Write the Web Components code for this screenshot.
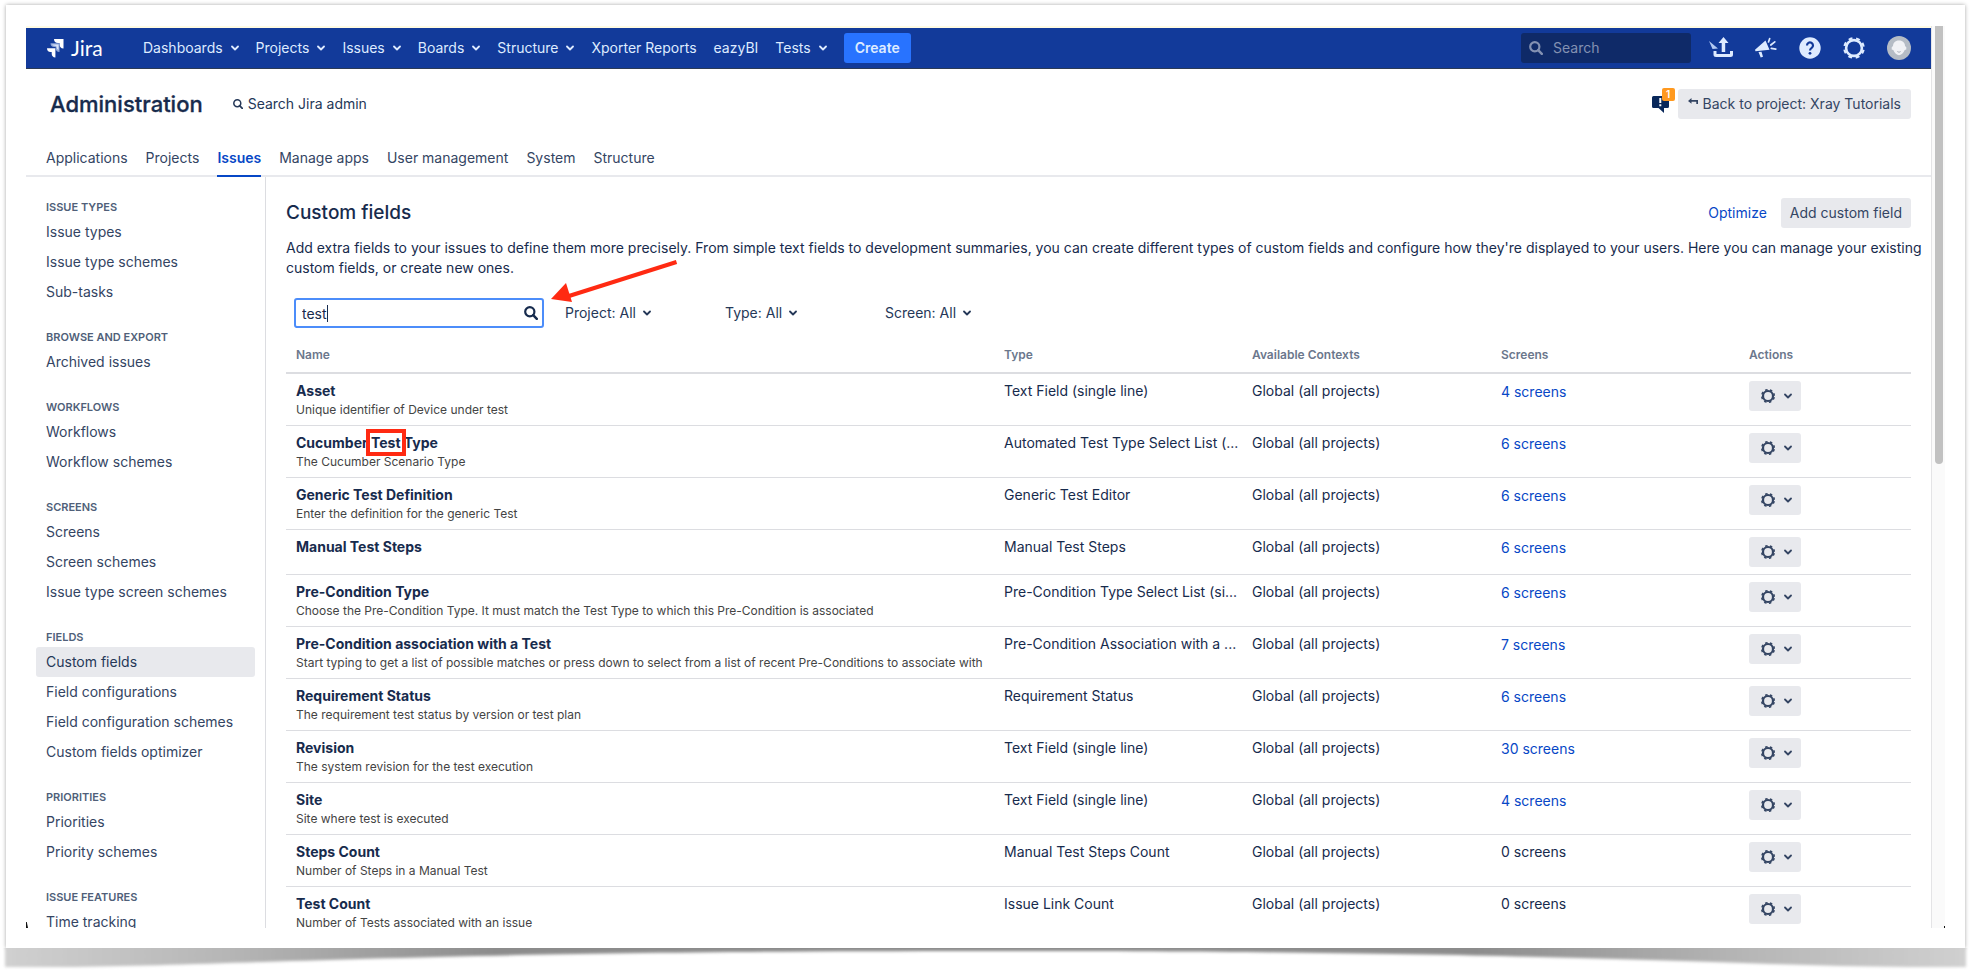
<!DOCTYPE html>
<html lang="en">
<head>
<meta charset="utf-8">
<title>Custom fields - Jira</title>
<style>
  body {
    margin: 0;
    height: 100vh;
    overflow: hidden;
    background: #fff;
    color: #172b4d;
    font: 14px/20px Inter, "Liberation Sans", sans-serif;
  }
</style>
</head>
<body>
<page-frame>
  <jira-header></jira-header>
  <admin-header></admin-header>
  <admin-layout>
    <side-nav slot="side"></side-nav>
    <field-intro></field-intro>
    <field-filters></field-filters>
    <field-table></field-table>
  </admin-layout>
</page-frame>

<script>
const icons = {
  chevron: `<svg width="8" height="8" viewBox="0 0 8 8"><path d="M1 2.5l3 3 3-3" fill="none" stroke="currentColor" stroke-width="1.8" stroke-linecap="round" stroke-linejoin="round"/></svg>`,
  search: `<svg width="14" height="14" viewBox="0 0 14 14"><g fill="none" stroke="currentColor" stroke-width="2.2"><circle cx="5.8" cy="5.8" r="4.6"/><path d="M9.2 9.2l3.600 3.600" stroke-width="2.500" stroke-linecap="round"/></g></svg>`,
  smallSearch: `<svg width="10" height="10" viewBox="0 0 14 14"><g fill="none" stroke="currentColor" stroke-width="2.1"><circle cx="6" cy="6" r="4.9"/><path d="M9.2 9.2L13 13" stroke-width="2.4" stroke-linecap="round"/></g></svg>`,
  logo: `<svg width="18" height="20" viewBox="0 0 18 20"><path d="M7 1h9.500v9.500a4.300 4.300 0 0 1-4-4.300V5.100h-1.500A4.200 4.200 0 0 1 7 1z" fill="#fff"/><path d="M3.500 5.200h9v8.900a4 4 0 0 1-3.800-4V9H7.300a3.900 3.900 0 0 1-3.800-3.800z" fill="#8fa6d8"/><path d="M0 10.200h8.400v9.300a4 4 0 0 1-3.700-4v-1.400H3.600A3.900 3.900 0 0 1 0 10.200z" fill="#fff"/><path d="M5 6.500h6.500v5.500a4 4 0 0 1-2-3.500l-1.500-.8a3.500 3.500 0 0 1-3-1.200z" fill="#dbe4f7"/></svg>`,
  upload: `<svg width="24" height="22" viewBox="0 0 24 22"><path d="M0 4l9 7.500-5.500.5L2 18 3.500 12z" fill="#b3c9f2"/><g fill="currentColor"><path d="M14.500 0l5 6h-3.300v9h-3.500V6H9.500z"/><path d="M4.500 14h3v3h13.500v-3h3v3.500a2.500 2.500 0 0 1-2.500 2.500H7a2.500 2.500 0 0 1-2.500-2.500z"/></g></svg>`,
  horn: `<svg width="22" height="22" viewBox="0 0 22 22"><path d="M10.500 3.500l4 9.300L.5 14.200 0 12.800zM3.500 15l3-.3 1.500 5-2.300.8z" fill="currentColor"/><path d="M13.500 5l1.200-3.500M15.800 8l4-3.200M16.300 11.300l4.500.8" stroke="currentColor" stroke-width="1.700" stroke-linecap="round"/></svg>`,
  help: `<svg width="22" height="22" viewBox="0 0 22 22"><circle cx="11" cy="11" r="10.700" fill="currentColor"/><path d="M8 8.500a3 3 0 1 1 4.700 2.400c-1 .7-1.700 1.200-1.700 2.600" fill="none" stroke="#123a9a" stroke-width="2.200"/><circle cx="11" cy="16.300" r="1.400" fill="#123a9a"/></svg>`,
  bigGear: `<svg width="22" height="22" viewBox="0 0 22 22"><circle cx="11" cy="11" r="7.900" fill="none" stroke="currentColor" stroke-width="2.600"/><circle cx="11" cy="11" r="9.700" fill="none" stroke="currentColor" stroke-width="2.200" stroke-dasharray="3.900 3.718" stroke-dashoffset="-1.859"/></svg>`,
  gear: `<svg width="14" height="14" viewBox="0 0 14 14"><circle cx="7" cy="7" r="5" fill="none" stroke="currentColor" stroke-width="2.200"/><circle cx="7" cy="7" r="6.300" fill="none" stroke="currentColor" stroke-width="1.500" stroke-dasharray="2.500 2.448" stroke-dashoffset="-1.224"/></svg>`,
  avatar: `<svg width="24" height="24" viewBox="0 0 24 24"><circle cx="12" cy="12" r="12" fill="#b5bcc5"/><path d="M12 4.500c4 0 6 2.500 6 5.500l1.300 1.300v2.200L17.700 14c-1 3-3.700 5.200-5.700 5.200S7.300 17 6.300 14l-1.600-.5v-2.200L6 10c0-3 2-5.500 6-5.500z" fill="#f1f2f5"/><path d="M10.300 15.500q1.700 1.500 3.400 0" fill="none" stroke="#9aa2ad" stroke-width=".8"/></svg>`,
  feedback: `<svg width="17" height="17" viewBox="0 0 17 17"><path d="M1.500 0h14a1.500 1.500 0 0 1 1.500 1.500v9a1.500 1.500 0 0 1-1.500 1.500H12v5l-5.500-5h-5A1.500 1.500 0 0 1 0 10.500v-9A1.500 1.500 0 0 1 1.500 0z" fill="#09285a"/><path d="M8.300 2v5M8.300 8.300v2" stroke="#fff" stroke-width="2"/></svg>`,
  back: `<svg width="10" height="8" viewBox="0 0 10 8"><path d="M3.500 0v2H10v4H8.300V3.800H3.500v2L0 2.900z" fill="currentColor"/></svg>`,
};

const shared = `
  * { box-sizing: border-box; }
  a { color: inherit; text-decoration: none; }
  button, input { font: inherit; color: inherit; margin: 0; }
  button { border: 0; border-radius: 3px; cursor: pointer; white-space: nowrap; }
  svg { display: block; flex: none; }
`;

// Attaches an open shadow root and fills it from a template.
class BaseElement extends HTMLElement {
  constructor() {
    super();
    const template = document.createElement("template");
    template.innerHTML = `<style>${shared}${this.styles()}</style>${this.markup()}`;
    this.attachShadow({ mode: "open" }).appendChild(template.content.cloneNode(true));
  }
}

class PageFrame extends BaseElement {
  styles() {
    return `
      :host { display: block; box-sizing: border-box; height: 100%; padding: 5px 14px 29px 6px; }
      .card { position: relative; height: 100%; padding: 21px 20px 20px; background: #fff; box-shadow: 0 0 4px rgba(0,0,0,.35); }
      .shadow { position: absolute; left: -4px; top: 100%; width: calc(100% + 8px); height: 26px; }
      .paper { position: absolute; inset: 0; background: #fff; }
      .screen { position: relative; display: flex; height: 100%; }
      .page { flex: 1; min-width: 0; overflow: hidden; border-top: 2px solid #fffbe3; }
      .track { width: 14px; padding-left: 3px; background: #fafafa; border-left: 1px solid #e4e4e6; }
      .thumb { width: 8px; height: calc(49% - 4px); background: #c1c1c1; border-radius: 0 0 4px 4px; }
      .mark { position: absolute; bottom: 0; background: #111; }
      .left { left: 0; width: 2px; height: 6px; clip-path: polygon(0 0, 40% 0, 100% 100%, 0 100%); }
      .right { right: 0; width: 1px; height: 2px; }
    `;
  }
  markup() {
    return `
      <div class="card">
        <svg class="shadow" viewBox="0 0 1967 26" preserveAspectRatio="none" aria-hidden="true">
          <defs>
            <linearGradient id="g">
              <stop offset="0" stop-color="#d0d0d0"/><stop offset=".12" stop-color="#b4b4b4"/>
              <stop offset=".25" stop-color="#8c8c8c"/><stop offset=".75" stop-color="#8c8c8c"/>
              <stop offset=".88" stop-color="#b4b4b4"/><stop offset="1" stop-color="#d0d0d0"/>
            </linearGradient>
            <filter id="b" x="-1%" y="-20%" width="102%" height="140%"><feGaussianBlur stdDeviation="1.500"/></filter>
          </defs>
          <path d="M3-6V19H60C250 17 420 3 984 3S1717 17 1907 19H1964V-6z" fill="url(#g)" filter="url(#b)"/>
        </svg>
        <div class="paper"></div>
        <div class="screen">
          <div class="page"><slot></slot></div>
          <div class="track"><div class="thumb"></div></div>
          <i class="mark left"></i><i class="mark right"></i>
        </div>
      </div>`;
  }
}

class JiraHeader extends BaseElement {
  styles() {
    return `
      :host { display: flex; align-items: center; box-sizing: border-box; height: 41px; padding: 0 20px 0 21px; background: #123a9a; border-bottom: 1px solid #2b3a55; color: #deebff; }
      .logo { display: flex; align-items: center; gap: 6px; width: 96px; color: #fff; font: 21px/20px Lato, sans-serif; }
      nav { display: flex; align-items: center; gap: 17px; flex: 1; white-space: nowrap; }
      nav a { display: flex; align-items: center; gap: 8px; }
      .create { height: 30px; padding: 0 11px; background: #2873ff; font-weight: 600; }
      .search { display: flex; align-items: center; gap: 10px; width: 170px; height: 30px; padding: 0 8px; background: #0f2a68; border-radius: 3px; color: #8391b2; }
      .search input { width: 100%; min-width: 0; padding: 0; border: 0; outline: 0; background: none; }
      .search input::placeholder { color: #8391b2; opacity: 1; }
      .tools { display: flex; align-items: center; gap: 22px; margin-left: 18px; }
      .tools button { padding: 0; background: none; }
    `;
  }
  markup() {
    const items = ["Dashboards", "Projects", "Issues", "Boards", "Structure", "Xporter Reports", "eazyBI", "Tests"];
    const plain = ["Xporter Reports", "eazyBI"];
    const tools = { upload: "Updates", horn: "Feedback", help: "Help", bigGear: "Administration", avatar: "Profile" };
    return `
      <a class="logo" href="#">${icons.logo}<span>Jira</span></a>
      <nav>
        ${items.map((i) => `<a href="#">${i}${plain.includes(i) ? "" : icons.chevron}</a>`).join("")}
        <button class="create">Create</button>
      </nav>
      <label class="search">${icons.search}<input type="text" placeholder="Search" aria-label="Search"></label>
      <div class="tools">
        ${Object.keys(tools).map((t) => `<button aria-label="${tools[t]}">${icons[t]}</button>`).join("")}
      </div>`;
  }
}

class AdminHeader extends BaseElement {
  styles() {
    return `
      :host { display: block; padding: 20px 20px 0; border-bottom: 2px solid #e8e9ed; }
      .top { display: flex; align-items: center; height: 30px; }
      h1 { margin: 0 30px 0 4px; font-size: 22px; font-weight: 500; line-height: 30px; -webkit-text-stroke: .3px; }
      .find { display: flex; align-items: center; gap: 5px; flex: 1; color: #253858; }
      .notice { position: relative; padding: 0; margin-right: 9px; background: none; }
      .badge { position: absolute; left: 10px; top: -8px; width: 13px; height: 13px; border-radius: 2px; background: #ff991f; color: #fff; font-size: 10px; font-weight: 600; line-height: 13px; }
      .back { display: flex; gap: 5px; height: 30px; padding: 5px 10px; border-radius: 3px; background: #e8e9ed; color: #344563; }
      .back svg { margin-top: 4px; }
      nav { display: flex; gap: 18px; margin-top: 29px; color: #344563; }
      nav a { padding-bottom: 7px; }
      nav a.active { margin-bottom: -2px; border-bottom: 2px solid #0747c6; color: #0747c6; font-weight: 600; }
    `;
  }
  markup() {
    const tabs = ["Applications", "Projects", "Issues", "Manage apps", "User management", "System", "Structure"];
    return `
      <div class="top">
        <h1>Administration</h1>
        <a class="find" href="#">${icons.smallSearch}Search Jira admin</a>
        <button class="notice" aria-label="Notifications">${icons.feedback}<span class="badge">1</span></button>
        <a class="back" href="#">${icons.back}Back to project: Xray Tutorials</a>
      </div>
      <nav>${tabs.map((t) => `<a href="#"${t === "Issues" ? ' class="active"' : ""}>${t}</a>`).join("")}</nav>`;
  }
}

class AdminLayout extends BaseElement {
  styles() {
    return `
      :host { display: flex; }
      aside { flex: none; width: 240px; padding: 20px 10px; border-right: 1px solid #dcdde1; }
      main { flex: 1; min-width: 0; padding: 21px 20px; }
    `;
  }
  markup() {
    return `<aside><slot name="side"></slot></aside><main><slot></slot></main>`;
  }
}

class SideNav extends BaseElement {
  styles() {
    return `
      :host { display: block; color: #344563; }
      section { margin-bottom: 20px; }
      h2 { margin: 0; padding: 0 10px; color: #505f79; font-size: 11px; font-weight: 600; line-height: 20px; text-transform: uppercase; }
      a { display: block; padding: 0 10px; border-radius: 3px; line-height: 30px; white-space: nowrap; }
      a.active { background: #e8e9ed; color: #253858; }
    `;
  }
  markup() {
    const groups = {
      "Issue types": ["Issue types", "Issue type schemes", "Sub-tasks"],
      "Browse and export": ["Archived issues"],
      "Workflows": ["Workflows", "Workflow schemes"],
      "Screens": ["Screens", "Screen schemes", "Issue type screen schemes"],
      "Fields": ["Custom fields", "Field configurations", "Field configuration schemes", "Custom fields optimizer"],
      "Priorities": ["Priorities", "Priority schemes"],
      "Issue features": ["Time tracking"],
    };
    return Object.keys(groups).map((g) => `
      <section>
        <h2>${g}</h2>
        ${groups[g].map((i) => `<a href="#"${i === "Custom fields" ? ' class="active"' : ""}>${i}</a>`).join("")}
      </section>`).join("");
  }
}

class FieldIntro extends BaseElement {
  styles() {
    return `
      :host { display: block; }
      .head { display: flex; align-items: center; gap: 14px; }
      h2 { flex: 1; margin: 0; font-size: 19px; font-weight: 500; line-height: 30px; }
      a { color: #0747c6; }
      button { height: 30px; padding: 0 9px; background: #e8e9ed; color: #344563; }
      p { margin: 10px -16px 0 0; }
    `;
  }
  markup() {
    return `
      <div class="head"><h2>Custom fields</h2><a href="#">Optimize</a><button>Add custom field</button></div>
      <p>Add extra fields to your issues to define them more precisely. From simple text fields to development summaries, you can create different types of custom fields and configure how they're displayed to your users. Here you can manage your existing custom fields, or create new ones.</p>`;
  }
}

class FieldFilters extends BaseElement {
  styles() {
    return `
      :host { display: flex; margin: 20px 0 10px 8px; }
      .box { position: relative; width: 250px; height: 30px; margin-right: 21px; }
      input { width: 100%; height: 100%; padding: 0 30px 0 6px; border: 2px solid #4c8dfa; border-radius: 3px; outline: 0; }
      .box > svg { position: absolute; right: 6px; top: 8px; }
      .caret { position: absolute; left: 33px; top: 7px; width: 1px; height: 17px; background: #172b4d; }
      .box .arrow { left: 257px; right: auto; top: -41px; }
      .filter { display: flex; align-items: center; gap: 7px; width: 160px; padding: 0; background: none; color: #253858; }
    `;
  }
  markup() {
    return `
      <div class="box">
        <input type="text" value="test" aria-label="Search custom fields">
        ${icons.search}<i class="caret"></i>
        <svg class="arrow" width="130" height="48" viewBox="0 0 130 48" aria-hidden="true"><path d="M125.500 5L18 39" stroke="#ff2a12" stroke-width="4"/><path d="M0 42l15-16 6 19z" fill="#ff2a12"/></svg>
      </div>
      ${["Project", "Type", "Screen"].map((f) => `<button class="filter">${f}: All${icons.chevron}</button>`).join("")}`;
  }
}

class FieldTable extends BaseElement {
  styles() {
    return `
      :host { display: block; }
      table { width: 100%; table-layout: fixed; border-spacing: 0; }
      th, td { padding: 7px 10px; text-align: left; vertical-align: top; white-space: nowrap; }
      th { border-bottom: 2px solid #dcdde1; color: #6b778c; font-size: 12px; font-weight: 600; }
      td { border-bottom: 1px solid #dcdde1; }
      .name { font-weight: 700; }
      .desc { color: #444; font-size: 12px; line-height: 17px; }
      td a { display: block; line-height: 22px; color: #0747c6; }
      .hit { outline: 4px solid #ff2a12; outline-offset: 1px; }
      button { display: flex; align-items: center; gap: 9px; width: 52px; height: 30px; padding: 0 9px 0 12px; background: #e8e9ed; color: #344563; }
      .w1 { width: 708px; } .w2 { width: 248px; } .w3 { width: 249px; } .w4 { width: 248px; }
      @media (max-width: 1900px) {
        .w1 { width: 43%; } .w2, .w3, .w4 { width: 15%; }
      }
    `;
  }
  markup() {
    const rows = [
      ["Asset", "Unique identifier of Device under test", "Text Field (single line)", 4],
      ["Cucumber <span class=\"hit\">Test</span> Type", "The Cucumber Scenario Type", "Automated Test Type Select List (...", 6],
      ["Generic Test Definition", "Enter the definition for the generic Test", "Generic Test Editor", 6],
      ["Manual Test Steps", "", "Manual Test Steps", 6],
      ["Pre-Condition Type", "Choose the Pre-Condition Type. It must match the Test Type to which this Pre-Condition is associated", "Pre-Condition Type Select List (si...", 6],
      ["Pre-Condition association with a Test", "Start typing to get a list of possible matches or press down to select from a list of recent Pre-Conditions to associate with", "Pre-Condition Association with a ...", 7],
      ["Requirement Status", "The requirement test status by version or test plan", "Requirement Status", 6],
      ["Revision", "The system revision for the test execution", "Text Field (single line)", 30],
      ["Site", "Site where test is executed", "Text Field (single line)", 4],
      ["Steps Count", "Number of Steps in a Manual Test", "Manual Test Steps Count", 0],
      ["Test Count", "Number of Tests associated with an issue", "Issue Link Count", 0],
    ];
    return `
      <table>
        <thead><tr><th class="w1">Name</th><th class="w2">Type</th><th class="w3">Available Contexts</th><th class="w4">Screens</th><th>Actions</th></tr></thead>
        <tbody>
          ${rows.map(([name, desc, type, screens]) => `
            <tr>
              <td><div class="name">${name}</div>${desc && `<div class="desc">${desc}</div>`}</td>
              <td>${type}</td>
              <td>Global (all projects)</td>
              <td>${screens ? `<a href="#">${screens} screens</a>` : "0 screens"}</td>
              <td><button aria-label="Actions">${icons.gear}${icons.chevron}</button></td>
            </tr>`).join("")}
        </tbody>
      </table>`;
  }
}

customElements.define("page-frame", PageFrame);
customElements.define("jira-header", JiraHeader);
customElements.define("admin-header", AdminHeader);
customElements.define("admin-layout", AdminLayout);
customElements.define("side-nav", SideNav);
customElements.define("field-intro", FieldIntro);
customElements.define("field-filters", FieldFilters);
customElements.define("field-table", FieldTable);
</script>
</body>
</html>
